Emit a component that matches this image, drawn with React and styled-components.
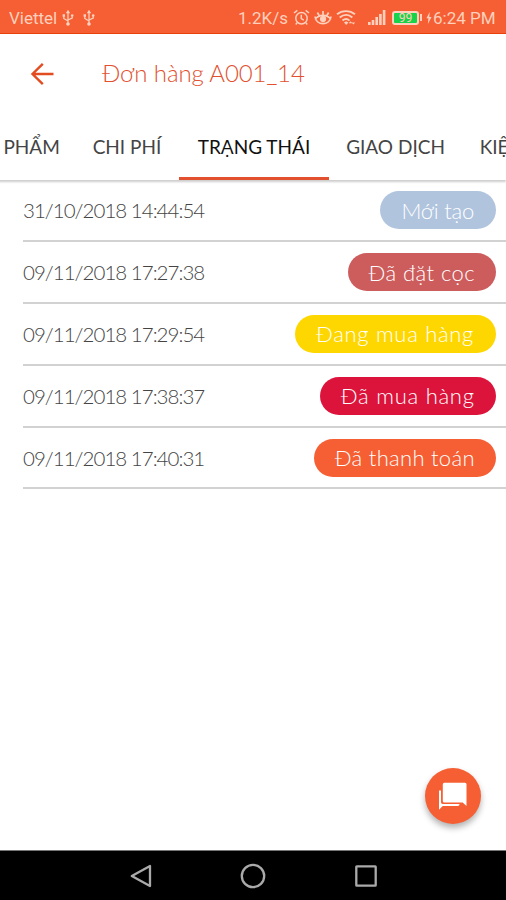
import React from 'react';
import styled, { createGlobalStyle } from 'styled-components';

const color = {
  primary: '#f55f33',
  statusText: '#ffd0bd',
  accent: '#e2502f',
  text: '#444',
  line: '#d2d2d2'
};

const tabs = [
  { label: 'PHẨM', width: 54 },
  { label: 'CHI PHÍ', width: 69 },
  { label: 'TRẠNG THÁI', width: 114.5, active: true },
  { label: 'GIAO DỊCH', width: 98 },
  { label: 'KIỆN', width: 43 }
];

const statuses = [
  { time: '31/10/2018 14:44:54', label: 'Mới tạo', width: 115.5, tracking: -0.2, background: '#b0c4de' },
  { time: '09/11/2018 17:27:38', label: 'Đã đặt cọc', width: 147.5, tracking: 0.45, background: '#cd5c5c' },
  { time: '09/11/2018 17:29:54', label: 'Đang mua hàng', width: 201, tracking: 0.7, background: '#ffd700' },
  { time: '09/11/2018 17:38:37', label: 'Đã mua hàng', width: 175.5, tracking: 0.75, background: '#dc143c' },
  { time: '09/11/2018 17:40:31', label: 'Đã thanh toán', width: 181.5, tracking: 0.3, background: '#f55f33' }
];

const UsbIcon = () => (
  <svg width="12" height="18" viewBox="0 0 12 18" fill="none" stroke="currentColor" strokeWidth="1.3">
    <path d="M6 3v12M1.8 7v2.5L6 12M10.2 7v2L6 11" />
    <path d="M6 .8 3.8 4.2h4.4zM.6 5.3H3v2.4H.6z" fill="currentColor" stroke="none" />
    <circle cx="10.2" cy="6.5" r="1.3" fill="currentColor" stroke="none" />
    <circle cx="6" cy="15" r="1.8" fill="currentColor" stroke="none" />
  </svg>
);

const AlarmIcon = () => (
  <svg width="17" height="17" viewBox="0 0 17 17" fill="none" stroke="currentColor" strokeWidth="1.5">
    <circle cx="8.5" cy="9.3" r="5.7" />
    <path d="M8.3 5.8v3.8l2.5 1.5M1 4l3.3-2.7M16 4l-3.3-2.7M4.2 13.6 2.8 15.5M12.8 13.6l1.4 1.9" />
  </svg>
);

const EyeIcon = () => (
  <svg width="18" height="17" viewBox="0 0 18 17" fill="none" stroke="currentColor" strokeWidth="1.7">
    <path d="M1 7.5c1 9.5 15 9.5 16 0M1 10.5c4-5.5 12-5.5 16 0M9 2v3.5M3.4 3.5l1.7 3M14.6 3.5l-1.7 3" />
    <circle cx="9" cy="10" r="2.3" fill="currentColor" />
  </svg>
);

const WifiIcon = () => (
  <svg width="20" height="17" viewBox="0 0 20 17" fill="none" stroke="currentColor" strokeWidth="1.9">
    <path d="M1 5.3c5-4.3 13-4.3 18 0M3.7 8.5c4-3.3 9-3.3 12.6 0M6.5 11.6c2.2-1.8 5-1.8 7 0" />
    <path d="m8 13.5 2.2-1.2 2.2 1.2-2.2 2.5z" fill="currentColor" stroke="none" />
    <path d="m12.7 14.2 1.8-2 1.8 2zM15.6 13.400h3.600l-1.800 2.200z" fill="currentColor" stroke="none" />
  </svg>
);

const SignalIcon = () => (
  <svg width="18" height="17" viewBox="0 0 18 17" fill="currentColor">
    <path d="M0 13h2.6v3H0zM3.7 11h2.6v5H3.7zM7.4 8H10v8H7.4zM11.1 5h2.6v11h-2.6zM14.8 1h2.6v15h-2.6z" />
  </svg>
);

const BoltIcon = () => (
  <svg width="6" height="12" viewBox="0 0 6 14" fill="currentColor">
    <path d="M3.7 0 0 7.4h2.3L1.7 14 6 5.8H3.4z" />
  </svg>
);

const BackArrowIcon = () => (
  <svg width="24" height="24" viewBox="0 0 24 24" fill="none" stroke="currentColor" strokeWidth="2.4">
    <path d="M23.5 12H2.5M12.8 1.8 2.5 12l10.3 10.2" />
  </svg>
);

const ForumIcon = () => (
  <svg width="30" height="30" viewBox="0 0 30 30" fill="#fff">
    <path d="M6.300 1.700h20.700a1.500 1.500 0 0 1 1.500 1.500V25l-3.800-3.600H6.300a1.500 1.500 0 0 1-1.500-1.500V3.200a1.500 1.500 0 0 1 1.500-1.500z" />
    <path d="M1 9.500h2v11.700a1.700 1.700 0 0 0 1.700 1.700h16.800v.4a1.600 1.600 0 0 1-1.600 1.600H4.700L1 28.800z" />
  </svg>
);

const App = () => (
  <Screen>
    <GlobalStyle />
    <StatusBar>
      <Carrier>Viettel</Carrier>
      <UsbIcon />
      <UsbIcon />
      <StatusRight>
        <Speed>1.2K/s</Speed>
        <AlarmIcon />
        <EyeIcon />
        <WifiIcon />
        <Signal>
          <SignalIcon />
        </Signal>
        <Battery>99</Battery>
        <BatteryTip />
        <BoltIcon />
        <Clock>6:24 PM</Clock>
      </StatusRight>
    </StatusBar>
    <AppBar>
      <BackButton aria-label="Quay lại">
        <BackArrowIcon />
      </BackButton>
      <Title>Đơn hàng A001_14</Title>
    </AppBar>
    <TabBar>
      {tabs.map(({ label, width, active }) => (
        <Tab key={label} $active={active} $width={width}>
          {label}
        </Tab>
      ))}
    </TabBar>
    <StatusList>
      {statuses.map(({ time, label, width, tracking, background }) => (
        <StatusRow key={time}>
          <Time>{time}</Time>
          <Pill $background={background} $width={width} $tracking={tracking}>
            {label}
          </Pill>
        </StatusRow>
      ))}
    </StatusList>
    <ChatButton aria-label="Chat">
      <ForumIcon />
    </ChatButton>
    <NavigationBar>
      <svg width="22" height="24" viewBox="0 0 22 24">
        <path d="M20 2v20L1.8 12z" />
      </svg>
      <svg width="26" height="26" viewBox="0 0 26 26">
        <circle cx="13" cy="13" r="11.2" />
      </svg>
      <svg width="22" height="22" viewBox="0 0 22 22">
        <rect x="1.3" y="1.3" width="19.4" height="19.4" rx="0.5" />
      </svg>
    </NavigationBar>
  </Screen>
);

const GlobalStyle = createGlobalStyle`
  * {
    box-sizing: border-box;
  }

  body {
    margin: 0;
    font-family: Lato, 'Open Sans', sans-serif;
  }

  svg {
    flex: none;
    display: block;
  }
`;

const Screen = styled.div`
  position: relative;
  display: flex;
  flex-direction: column;
  width: 506px;
  height: 900px;
  overflow: hidden;
  background-color: #fff;
`;

const StatusBar = styled.header`
  flex: none;
  display: flex;
  align-items: center;
  gap: 9px;
  height: 34px;
  padding: 2px 11px 0 9px;
  border-bottom: 1px solid #e8410c;
  background-color: ${color.primary};
  color: ${color.statusText};
  font-family: Roboto, sans-serif;
  font-size: 17px;
  white-space: nowrap;
`;

const Carrier = styled.span`
  width: 48px;
  margin-right: -4px;
`;

const StatusRight = styled.div`
  display: flex;
  align-items: center;
  margin-left: auto;
  gap: 4px;
`;

const Speed = styled.span`
  width: 51px;
`;

const Signal = styled.span`
  margin: 0 1px 0 8px;
`;

const Battery = styled.span`
  display: flex;
  align-items: center;
  justify-content: center;
  width: 27px;
  height: 14px;
  margin-left: 1px;
  border: 2px solid ${color.statusText};
  border-radius: 3px;
  background-color: #16d34a;
  font-size: 12px;
  line-height: 10px;
`;

const BatteryTip = styled.span`
  width: 2px;
  height: 7px;
  margin-left: -3px;
  background-color: ${color.statusText};
`;

const Clock = styled.span`
  width: 62px;
  margin-left: -3px;
  text-align: right;
`;

const AppBar = styled.div`
  flex: none;
  display: flex;
  align-items: center;
  height: 79px;
  padding-left: 30px;
  color: ${color.accent};
`;

const BackButton = styled.button`
  padding: 0;
  border: 0;
  background: none;
  color: #e24c20;
`;

const Title = styled.h1`
  margin: -3px 0 0 48px;
  font-size: 24px;
  font-weight: 300;
  letter-spacing: -0.1px;
`;

const TabBar = styled.nav`
  flex: none;
  display: flex;
  height: 67px;
  margin-left: -14.5px;
  box-shadow: 0 2px 2px rgba(0, 0, 0, 0.2);
`;

const Tab = styled.div`
  flex: none;
  display: flex;
  align-items: center;
  justify-content: center;
  width: ${({ $width }) => $width + 35.3}px;
  padding-top: 2px;
  border-bottom: 3px solid ${({ $active }) => ($active ? color.accent : 'transparent')};
  color: ${({ $active }) => ($active ? '#111' : '#444')};
  font-size: 19px;
  font-weight: 400;
  white-space: nowrap;

  &:first-child {
    padding-left: 3px;
  }
`;

const StatusList = styled.ul`
  flex: 1;
  margin: 0;
  padding: 0.5px 0 0 23px;
  list-style: none;
`;

const StatusRow = styled.li`
  display: flex;
  align-items: center;
  justify-content: space-between;
  height: 61.8px;
  padding-right: 10.5px;
  border-bottom: 2px solid ${color.line};
`;

const Time = styled.time`
  color: ${color.text};
  font-size: 20.5px;
  font-weight: 300;
  letter-spacing: -0.97px;
`;

const Pill = styled.span`
  display: flex;
  align-items: center;
  justify-content: center;
  width: ${({ $width }) => $width}px;
  height: 38px;
  border-radius: 19px;
  background-color: ${({ $background }) => $background};
  color: #fff;
  font-size: 22px;
  font-weight: 300;
  letter-spacing: ${({ $tracking }) => $tracking}px;
  white-space: nowrap;
`;

const ChatButton = styled.button`
  position: absolute;
  right: 25px;
  bottom: 76px;
  display: flex;
  align-items: center;
  justify-content: center;
  width: 56px;
  height: 56px;
  padding: 0;
  border: 0;
  border-radius: 50%;
  background-color: ${color.primary};
  box-shadow: 0 4px 6px rgba(0, 0, 0, 0.3);
`;

const NavigationBar = styled.footer`
  flex: none;
  display: flex;
  align-items: center;
  justify-content: center;
  gap: 88.5px;
  height: 50px;
  border-top: 1px solid #777;
  background-color: #000;

  svg {
    fill: none;
    stroke: #aaa;
    stroke-width: 2.3px;
    stroke-linejoin: round;
  }
`;

export default App;
